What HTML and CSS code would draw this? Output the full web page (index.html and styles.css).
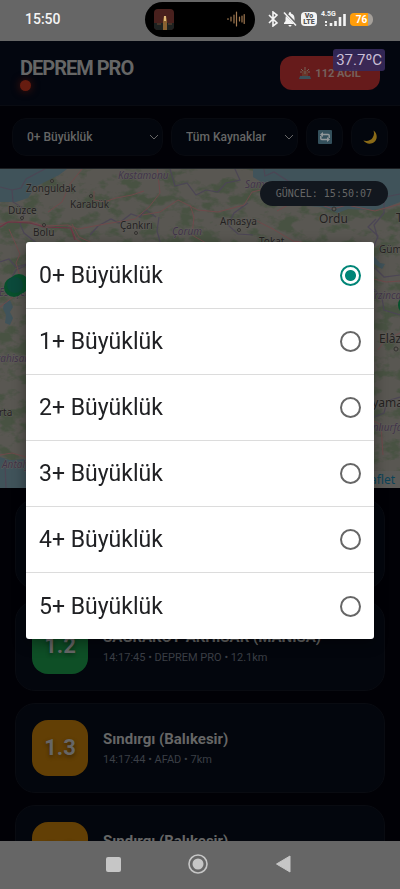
FILE: index.html
```html
<!DOCTYPE html>
<html lang="tr">
<head>
<meta charset="UTF-8" />
<meta name="viewport" content="width=device-width, initial-scale=1" />
<title>Deprem Pro</title>
<link rel="stylesheet" href="styles.css">
</head>
<body>
  <div class="status-bar">
    <span class="clock">15:50</span>
    <div class="island">
      <svg class="cover" viewBox="0 0 20 21" aria-hidden="true">
        <rect width="20" height="21" rx="4" fill="#48201d"/>
        <path d="M0 14h20v3a4 4 0 0 1-4 4H4a4 4 0 0 1-4-4z" fill="#1d2120"/>
        <path d="M9 21V11l1-4h2l1 4v10z" fill="#8a6131"/>
        <path d="M10 7h2v5h-2z" fill="#e0b878"/>
        <path d="M3 15h4M14 15h4" stroke="#6b4630"/>
      </svg>
      <svg class="wave" viewBox="0 0 18 16" aria-hidden="true">
        <path d="M1 7.500v1M4 6v4M7 4v8M9.500 1v14M12.500 6v4M15 5v6M17.200 3.500v9" stroke="#a07850" stroke-width="1.200" stroke-linecap="round"/>
      </svg>
    </div>
    <div class="status-icons">
      <svg width="11" height="16" viewBox="0 0 11 16" aria-hidden="true">
        <path d="M1 4l8 8-4 3V1l4 3-8 8" fill="none" stroke="#f4f4f4" stroke-width="1.6"/>
      </svg>
      <svg width="14" height="16" viewBox="0 0 14 16" aria-hidden="true">
        <path d="M7 1c1 0 1 1 1 1.600 2.500.7 3.500 2.500 3.500 4.900V10l1.500 2v1H1v-1l1.500-2V7.500c0-2.400 1.200-4.200 3.500-4.900C6 2 6 1 7 1zM5.500 14h3c0 2-3 2-3 0z" fill="#f4f4f4"/>
        <path d="M1 1l13 13" stroke="#666" stroke-width="3"/>
        <path d="M1 1.500l12 13" stroke="#f4f4f4" stroke-width="1.500"/>
      </svg>
      <span class="volte"><span>Vo</span><span>LTE</span></span>
      <span class="signal">
        <span class="net">4.5G</span>
        <svg width="25" height="15" viewBox="0 0 25 15" aria-hidden="true">
          <path d="M10 14v-3M14.500 14V9M19 14V5M23.500 14V2" stroke="#f4f4f4" stroke-width="2.600"/>
          <path d="M5 9v2M5 12.500v1.500" stroke="#f4f4f4" stroke-width="2"/>
        </svg>
      </span>
      <span class="battery">76</span>
    </div>
  </div>

  <header class="header">
    <div class="brand">
      <h1>DEPREM PRO</h1>
      <span class="live-dot"></span>
    </div>
    <a class="emergency" href="tel:112">
      <svg width="12" height="12" viewBox="0 0 12 12" aria-hidden="true">
        <path d="M3 9V6a3 3 0 0 1 6 0v3z" fill="#6b3529"/>
        <path d="M6 0v3M2 2l2 2M10 2L8 4M1 5h2M9 5h2M6 4v3" stroke="#75645b"/>
        <path d="M1 9h10l1 3H0z" fill="#3c5059"/>
      </svg>
      112 ACİL
    </a>
    <span class="temperature">37.7ºC</span>
  </header>

  <div class="toolbar">
    <select class="filter" aria-label="Büyüklük">
      <option>0+ Büyüklük</option>
    </select>
    <select class="filter" aria-label="Kaynak">
      <option>Tüm Kaynaklar</option>
    </select>
    <button class="icon-btn" type="button" aria-label="Yenile">
      <svg width="14" height="14" viewBox="0 0 14 14" aria-hidden="true">
        <rect width="14" height="14" rx="1" fill="#34505c"/>
        <path d="M11.200 8V5.500a1 1 0 0 0-1-1H4.500M2.800 6v2.500a1 1 0 0 0 1 1h5.700" fill="none" stroke="#92989b" stroke-width="1.500"/>
        <path d="M5 2v5L2 4.500zM9 7v5l3-2.500z" fill="#92989b"/>
      </svg>
    </button>
    <button class="icon-btn" type="button" aria-label="Koyu tema">
      <svg width="14" height="14" viewBox="0 0 14 14" aria-hidden="true">
        <path d="M10.500.500c4 3 4.300 8.500.8 11.500-3.300 2.700-8.500 2-11-1.500 4 1 7.500 0 9.300-2.800C11.200 5.200 11.300 3 10.500.500z" fill="#8a6a17"/>
      </svg>
    </button>
  </div>

  <div class="map">
    <svg class="tiles" viewBox="0 0 400 320" preserveAspectRatio="xMidYMin slice" role="img" aria-label="Deprem haritası">
      <defs>
        <filter id="woods" x="0" y="0" width="100%" height="100%" color-interpolation-filters="sRGB">
          <feTurbulence type="fractalNoise" baseFrequency="0.05 0.08" numOctaves="4" seed="8"/>
          <feColorMatrix values="0 0 0 0 0.255  0 0 0 0 0.315  0 0 0 0 0.235  0 6 0 0 -2.900"/>
        </filter>
      </defs>
      <rect width="400" height="320" fill="#595752"/>
      <rect width="400" height="320" filter="url(#woods)" opacity="0.7"/>
      <g fill="#40535a">
        <path d="M0 0h67l-8 6-12 6-12 6-7 11-12 4H0z"/>
        <path d="M253 0h147v33l-13 5-14 3-25-1-10 4-16-6-14-1-16-6-16-6-10-9-13-8z"/>
        <path d="M0 288l10 3 18-1v30H0z"/>
        <path d="M4 134l6-3 3 7-3 5 3 6-3 7-5-2 1-8-3-6z"/>
        <path d="M373 86l7 8 5 1-3 5-9-6zM20 110l7-3v5z"/>
      </g>
      <g fill="none" stroke="#4c4655" stroke-width="1.200">
        <path d="M0 18l12 3 9-2 5-9 13-7 6-3M12 21l1 12 13 8-6 14 4 9 15 12"/>
        <path d="M264 0l1 7 9-4 14 9 22 5 27 13 24 3 39-8M384 20v24l-10 12 4 14"/>
        <path d="M90 66l8-9 13-7 8 4 12-9 9 3 6-7 10 7"/>
        <path d="M170 0l5 17 12-3 9 12 10-5 12 2 8-9 14-3-6-13M159 48l-2 14 4 14"/>
        <path d="M248 34l-14 10-6 12 10 9 15 1M376 50l-8 8 10 9-4 10M27 95l-11 3-7-8-9 3M0 121l8-5 8-15 11-5"/>
        <path d="M374 98l10 10 16-2M374 120l8 9 2 12 16 5M374 302l26 3M5 293l1 27M374 248l10-4 3-12 13-4"/>
      </g>
      <g fill="none" stroke="#6f4a4b" stroke-width="1">
        <path d="M0 55l12-3 20 1 12 4 24-1 10 4 27-5 30-5 14-12 11-14-3-28"/>
        <path d="M94 22v9l10 2 12-4 16-3 12-4M70 57l7 14 10 5M72 55l7 13 18 8"/>
        <path d="M142 46l18-3 18-12 20 10 20 2 26-7 8-13 17-4M190 36l4 12-2 18 14 8h12"/>
        <path d="M48 43l14-10 8-18 12-15M253 50l20 10 20 12 30 4M277 42l24-13 32 11 14-4 28 6 25-7"/>
        <path d="M0 138l13-10 9-14-6-20 4-9-11-25M374 110l12 3 14-1M378 181l7-10 15-7M0 286l12-2 14 4M374 252l7 4 2 30"/>
      </g>
      <g fill="none" stroke="#6e3445" stroke-width="1.200">
        <path d="M0 58l8-5 22 1 14 4 27 1 4 12"/>
      </g>
      <g fill="#5b5954" stroke="#33312f">
        <circle cx="52" cy="12" r="1.500"/><circle cx="91" cy="27" r="1.500"/>
        <circle cx="22" cy="49" r="1.500"/><circle cx="44" cy="56" r="1.500"/>
        <circle cx="136" cy="64" r="1.500"/><circle cx="239" cy="61" r="1.500"/>
        <circle cx="334" cy="40" r="2"/><circle cx="396" cy="180" r="2"/>
      </g>
      <g class="city">
        <text x="26" y="23">Zonguldak</text>
        <text x="70" y="39">Karabük</text>
        <text x="8" y="45">Düzce</text>
        <text x="33" y="67">Bolu</text>
        <text x="120" y="60">Çankırı</text>
        <text x="220" y="56">Amasya</text>
        <text x="259" y="76">Tokat</text>
        <text x="379" y="84">Gümüşhane</text>
        <text x="-21" y="247">Isparta</text>
      </g>
      <g class="city city-large">
        <text x="319" y="54">Ordu</text>
        <text x="396" y="53">Trabzon</text>
        <text x="379" y="174">Elâzığ</text>
        <text x="354" y="238">Adıyaman</text>
      </g>
      <g class="province">
        <text x="118" y="10">Kastamonu</text>
        <text x="172" y="66">Çorum</text>
        <text x="245" y="19">Samsun</text>
        <text x="-1" y="127">Eskişehir</text>
        <text x="-39" y="193">Afyonkarahisar</text>
        <text x="369" y="130">Erzincan</text>
        <text x="362" y="262">Şanlıurfa</text>
        <text x="2" y="299">Antalya</text>
      </g>
      <g fill="#07502c">
        <circle cx="14" cy="118" r="10"/><circle cx="19" cy="115" r="10"/><circle cx="408" cy="136" r="10"/>
      </g>
      <circle cx="15" cy="116" r="8" fill="#0b4a3b"/>
    </svg>
    <span class="updated">GÜNCEL: 15:50:07</span>
    <a class="attribution" href="#">Leaflet</a>
  </div>

  <main class="quakes">
    <article class="quake">
      <span class="mag mag-low">1.2</span>
      <div class="info">
        <h2>AKHİSAR (MANİSA)</h2>
        <p>14:17:45 • DEPREM PRO • 7km</p>
      </div>
    </article>
    <article class="quake">
      <span class="mag mag-low">1.2</span>
      <div class="info">
        <h2>SAĞRAKÖY-AKHİSAR (MANİSA)</h2>
        <p>14:17:45 • DEPREM PRO • 12.1km</p>
      </div>
    </article>
    <article class="quake">
      <span class="mag mag-mid">1.3</span>
      <div class="info">
        <h2>Sındırgı (Balıkesir)</h2>
        <p>14:17:44 • AFAD • 7km</p>
      </div>
    </article>
    <article class="quake">
      <span class="mag mag-mid">1.3</span>
      <div class="info">
        <h2>Sındırgı (Balıkesir)</h2>
        <p>14:17:44 • AFAD • 7km</p>
      </div>
    </article>
  </main>

  <nav class="nav-bar">
    <button type="button" aria-label="Son uygulamalar">
      <svg width="20" height="20" viewBox="0 0 20 20"><rect x="3" y="3" width="15" height="15" rx="2" fill="#c6c6c6"/></svg>
    </button>
    <button type="button" aria-label="Ana ekran">
      <svg width="20" height="20" viewBox="0 0 20 20"><circle cx="10" cy="10" r="9" fill="none" stroke="#c6c6c6" stroke-width="1.600"/><circle cx="10" cy="10" r="5.500" fill="#c6c6c6"/></svg>
    </button>
    <button type="button" aria-label="Geri">
      <svg width="20" height="20" viewBox="0 0 20 20"><path d="M3.500 10L17 2v16z" fill="#c6c6c6" stroke="#c6c6c6" stroke-linejoin="round"/></svg>
    </button>
  </nav>

  <div class="overlay">
    <form class="picker" role="dialog" aria-label="Büyüklük">
      <label><span>0+ Büyüklük</span><input type="radio" name="mag" value="0" checked></label>
      <label><span>1+ Büyüklük</span><input type="radio" name="mag" value="1"></label>
      <label><span>2+ Büyüklük</span><input type="radio" name="mag" value="2"></label>
      <label><span>3+ Büyüklük</span><input type="radio" name="mag" value="3"></label>
      <label><span>4+ Büyüklük</span><input type="radio" name="mag" value="4"></label>
      <label><span>5+ Büyüklük</span><input type="radio" name="mag" value="5"></label>
    </form>
  </div>
</body>
</html>
```
FILE: styles.css
```css
* {
  box-sizing: border-box;
}

body {
  margin: 0;
  height: 100vh;
  display: flex;
  flex-direction: column;
  overflow: hidden;
  background: #010106;
  color: #666;
  font-family: Roboto, sans-serif;
}

button,
select {
  font: inherit;
  color: inherit;
}

/* status bar */
.status-bar {
  display: grid;
  grid-template-columns: 1fr 110px 1fr;
  align-items: center;
  flex: none;
  height: 41px;
  padding-bottom: 3px;
  background: #666;
  color: #f4f4f4;
}

.clock {
  padding-left: 25px;
  font-size: 14px;
  font-weight: 500;
}

.island {
  display: flex;
  align-items: center;
  justify-content: space-between;
  height: 35px;
  padding: 0 10px 0 9px;
  border-radius: 18px;
  background: #000;
}

.cover {
  width: 20px;
  height: 21px;
}

.wave {
  width: 18px;
  height: 16px;
}

.status-icons {
  display: flex;
  align-items: center;
  justify-content: flex-end;
  gap: 4px;
  padding-right: 27px;
}

.volte {
  display: flex;
  flex-direction: column;
  align-items: center;
  justify-content: center;
  width: 16px;
  height: 14px;
  flex: none;
  border-radius: 4px;
  background: #f4f4f4;
  color: #555;
  font-size: 7px;
  font-weight: 900;
  line-height: 6px;
}

.signal {
  position: relative;
  display: flex;
  width: 25px;
}

.net {
  position: absolute;
  top: -2px;
  left: 0;
  font-size: 7px;
  font-weight: 700;
  line-height: 8px;
}

.battery {
  width: 23px;
  height: 13px;
  flex: none;
  border-radius: 4px 6px 6px 4px;
  background: linear-gradient(90deg, #ff9d0a 80%, #a5a09a 80%);
  color: #fff;
  font-size: 10px;
  font-weight: 700;
  line-height: 13px;
  text-align: center;
}

/* header */
.header {
  position: relative;
  display: flex;
  align-items: center;
  justify-content: space-between;
  flex: none;
  height: 65px;
  padding: 0 20px;
  background: #03060f;
  border-bottom: 1px solid #090b12;
}

.brand h1 {
  margin: 0;
  font-size: 20px;
  font-weight: 700;
  line-height: 24px;
  letter-spacing: -1px;
}

.live-dot {
  display: block;
  width: 11px;
  height: 11px;
  border-radius: 50%;
  background: #661c10;
  box-shadow: 0 0 8px #4a130b;
}

.emergency {
  display: flex;
  align-items: center;
  justify-content: center;
  gap: 4px;
  width: 100px;
  height: 34px;
  border-radius: 12px;
  background: #661b1b;
  color: #75605c;
  font-size: 11px;
  font-weight: 700;
  text-decoration: none;
}

.temperature {
  position: absolute;
  top: 8px;
  right: 15px;
  padding: 1px 3px 0;
  border-radius: 3px;
  background: rgba(54, 42, 92, 0.9);
  color: #c9bfd6;
  font-size: 15px;
  line-height: 21px;
}

/* filters */
.toolbar {
  display: grid;
  grid-template-columns: 151fr 127fr 37px 37px;
  align-items: center;
  gap: 8px;
  flex: none;
  height: 62px;
  padding: 0 12px;
}

.filter {
  min-width: 0;
  height: 38px;
  padding: 0 20px 0 14px;
  border: 1px solid #080a10;
  border-radius: 14px;
  appearance: none;
  background: #03060d url("data:image/svg+xml,%3Csvg xmlns='http://www.w3.org/2000/svg' width='10' height='6'%3E%3Cpath d='M1 1l4 4 4-4' fill='none' stroke='%23666'/%3E%3C/svg%3E") no-repeat right 3px center;
  font-size: 12px;
  font-weight: 500;
}

.icon-btn {
  display: flex;
  align-items: center;
  justify-content: center;
  height: 38px;
  padding: 0;
  border: 1px solid #080a10;
  border-radius: 14px;
  background: #03060d;
}

/* map */
.map {
  position: relative;
  flex: none;
  height: 320px;
  overflow: hidden;
  border-top: 1px solid #1c1f22;
}

.tiles {
  display: block;
  width: 100%;
  height: 100%;
}

.city,
.province {
  font-family: "Noto Sans", sans-serif;
  font-size: 10px;
  fill: #23211f;
  stroke: #5f5d59;
  stroke-width: 1px;
  paint-order: stroke;
}

.city-large {
  font-size: 12px;
}

.province {
  font-style: italic;
  fill: #413449;
}

.updated {
  position: absolute;
  top: 12px;
  right: 12px;
  padding: 0 16px;
  border-radius: 13px;
  background: #12171e;
  color: #666;
  font-family: "DejaVu Sans Mono", monospace;
  font-size: 10px;
  line-height: 25px;
}

.attribution {
  position: absolute;
  right: 0;
  bottom: 0;
  padding: 0 5px;
  background: #5b5a57;
  color: #0b4358;
  font-family: "Noto Sans", sans-serif;
  font-size: 12px;
  line-height: 17px;
  text-decoration: none;
}

/* list */
.quakes {
  display: flex;
  flex-direction: column;
  gap: 12px;
  flex: 1;
  min-height: 0;
  overflow: hidden;
  padding: 11px 15px 0;
}

.quake {
  display: flex;
  align-items: center;
  gap: 15px;
  flex: none;
  padding: 16px;
  border: 1px solid #090b11;
  border-radius: 20px;
  background: #03060d;
}

.mag {
  width: 56px;
  height: 56px;
  flex: none;
  border-radius: 16px;
  font-size: 22px;
  font-weight: 700;
  line-height: 56px;
  text-align: center;
  text-shadow: 0 2px 4px rgba(0, 0, 0, 0.4);
}

.mag-low {
  background: #0e4f26;
}

.mag-mid {
  background: #623f05;
}

.info h2 {
  margin: 0 0 3px;
  font-size: 15px;
  font-weight: 700;
  line-height: 20px;
}

.info p {
  margin: 0;
  color: #3b3f46;
  font-size: 11px;
  line-height: 16px;
}

/* system navigation */
.nav-bar {
  display: flex;
  align-items: center;
  justify-content: center;
  gap: 65px;
  flex: none;
  height: 48px;
  padding: 0 4px 3px 0;
  background: #666;
}

.nav-bar button {
  display: flex;
  padding: 0;
  border: 0;
  background: none;
}

/* magnitude picker */
.overlay {
  position: fixed;
  inset: 0;
  display: flex;
  align-items: center;
  padding: 0 26px 8px;
}

.picker {
  flex: 1;
  padding-top: 1px;
  border-radius: 3px;
  background: #fff;
  box-shadow: 0 4px 14px rgba(0, 0, 0, 0.4);
}

.picker label {
  display: flex;
  align-items: center;
  justify-content: space-between;
  height: 66px;
  padding: 0 13px;
  border-bottom: 1px solid #dcdcdc;
  color: #202124;
  font-size: 23px;
}

.picker label:last-child {
  border-bottom: 0;
}

.picker input {
  appearance: none;
  width: 21px;
  height: 21px;
  margin: 0;
  border: 2px solid #666;
  border-radius: 50%;
}

.picker input:checked {
  border-color: #008577;
  background: radial-gradient(circle, #008577 5px, transparent 6px);
}
```
